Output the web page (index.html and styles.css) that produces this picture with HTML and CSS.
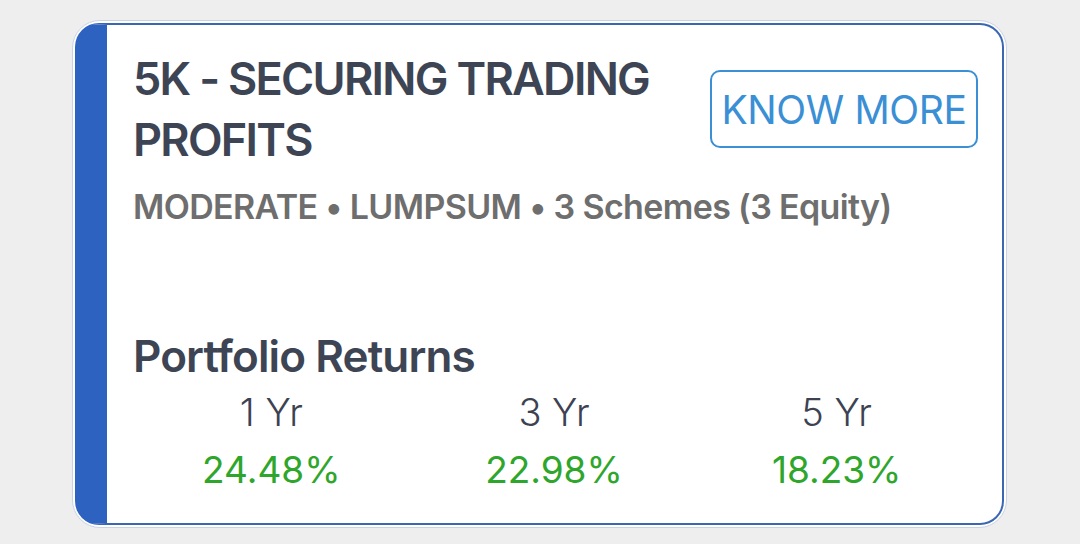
FILE: index.html
```html
<!DOCTYPE html>
<html>
<head>
<meta charset="utf-8">
<link rel="stylesheet" href="styles.css">
</head>
<body>
<div class="page">
  <div class="ring">
    <div class="card">
      <div class="header">
        <h1 class="title">5K - SECURING TRADING PROFITS</h1>
        <a class="know-btn">KNOW MORE</a>
      </div>
      <div class="meta">MODERATE • LUMPSUM • 3 Schemes (3 Equity)</div>
      <div class="returns">
        <div class="returns-title">Portfolio Returns</div>
        <div class="returns-grid">
          <div class="col"><div class="period">1 Yr</div><div class="pct">24.48%</div></div>
          <div class="col"><div class="period">3 Yr</div><div class="pct">22.98%</div></div>
          <div class="col"><div class="period">5 Yr</div><div class="pct">18.23%</div></div>
        </div>
      </div>
    </div>
  </div>
</div>
</body>
</html>
```
FILE: styles.css
```css
html, body {
  margin: 0;
  padding: 0;
  background: #eeeeee;
  font-family: Inter, "Noto Sans", sans-serif;
}
.page {
  width: 1080px;
  height: 544px;
  padding: 20px 0 0 72px;
  box-sizing: border-box;
}
.ring {
  width: 935px;
  height: 508px;
  box-sizing: border-box;
  border: 1.5px solid #c9d3e4;
  border-radius: 28px;
  padding: 2px;
  background: #ffffff;
}
.card {
  height: 100%;
  box-sizing: border-box;
  border: 2.5px solid #3b66b2;
  border-left: 32px solid #2d62c0;
  border-radius: 24px;
  background: #ffffff;
  padding: 23px 24px 0 26px;
}
.header {
  display: flex;
  justify-content: space-between;
  align-items: flex-start;
  gap: 40px;
}
.title {
  margin: 0;
  flex: 1;
  font-size: 45px;
  line-height: 61px;
  font-weight: 600;
  color: #3d4454;
  letter-spacing: -0.038em;
}
.know-btn {
  margin-top: 22px;
  width: 268px;
  height: 78px;
  box-sizing: border-box;
  border: 2.5px solid #3a8fd5;
  border-radius: 10px;
  display: flex;
  align-items: center;
  justify-content: center;
  color: #3a8fd5;
  font-size: 39px;
  font-weight: 400;
  letter-spacing: -0.01em;
}
.meta {
  margin-top: 15px;
  font-size: 34px;
  line-height: 44px;
  font-weight: 600;
  color: #6e6e6e;
  letter-spacing: -0.019em;
}
.returns {
  margin-top: 100px;
}
.returns-title {
  font-size: 44px;
  line-height: 54px;
  font-weight: 600;
  color: #3d4454;
  letter-spacing: -0.02em;
}
.returns-grid {
  display: grid;
  grid-template-columns: 1fr 1fr 1fr;
  margin-left: -3px;
}
.col {
  text-align: center;
}
.period {
  font-size: 38px;
  line-height: 58px;
  font-weight: 300;
  color: #3d4252;
}
.pct {
  font-size: 37px;
  line-height: 58px;
  font-weight: 400;
  color: #2ea62b;
}
```
